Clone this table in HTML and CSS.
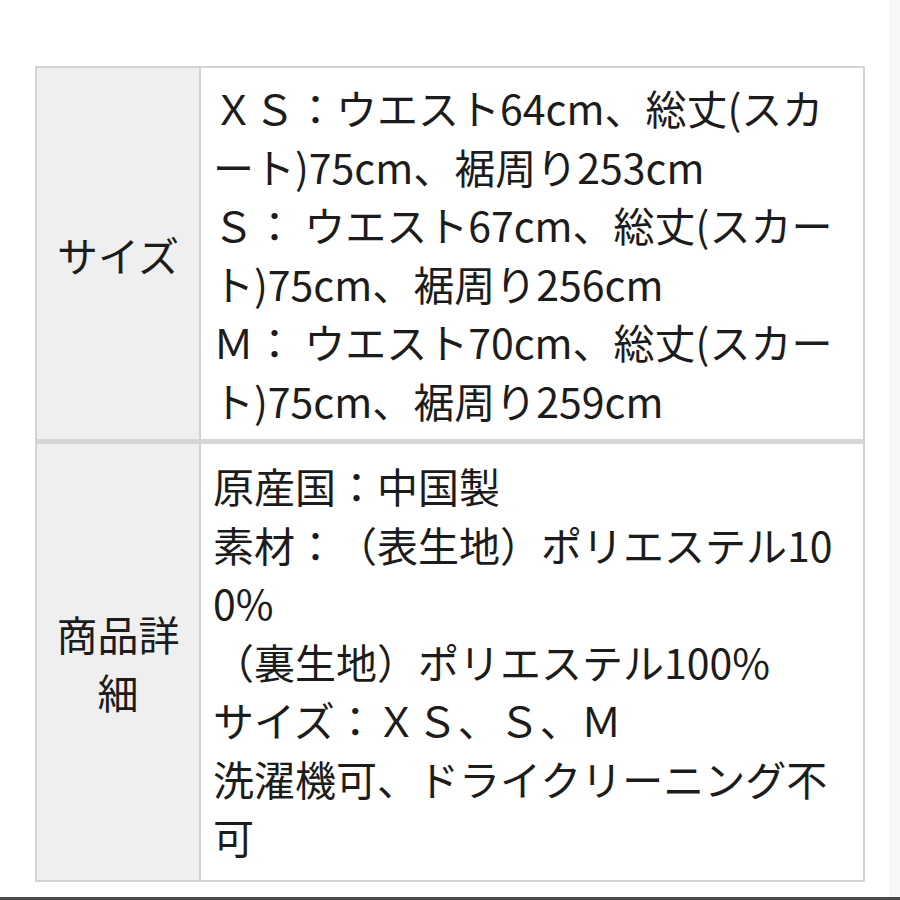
FILE: index.html
```html
<!DOCTYPE html>
<html lang="ja">
<head>
<meta charset="utf-8">
<link rel="stylesheet" href="styles.css">
</head>
<body>
<div class="page">
  <div class="spec">
    <div class="row row-size">
      <div class="label">サイズ</div>
      <div class="value">ＸＳ：ウエスト64cm、総丈(スカート)75cm、裾周り253cm<br>Ｓ： ウエスト67cm、総丈(スカート)75cm、裾周り256cm<br>Ｍ： ウエスト70cm、総丈(スカート)75cm、裾周り259cm</div>
    </div>
    <div class="row row-detail">
      <div class="label">商品詳細</div>
      <div class="value">原産国：中国製<br>素材：（表生地）ポリエステル100%<br>（裏生地）ポリエステル100%<br>サイズ：ＸＳ、Ｓ、Ｍ<br>洗濯機可、ドライクリーニング不可</div>
    </div>
  </div>
  <div class="bottom-bar"></div>
</div>
</body>
</html>
```

FILE: styles.css
```css
html, body {
  margin: 0;
  padding: 0;
}
body {
  width: 900px;
  height: 900px;
  overflow: hidden;
  background: linear-gradient(to right, #ffffff 0, #ffffff 889px, #f7f7f7 889px);
  font-family: "Noto Sans CJK JP", "Noto Sans", sans-serif;
  color: #1c1c1c;
  text-spacing-trim: space-all;
}
.page {
  padding-top: 66px;
  display: flex;
  flex-direction: column;
}
.spec {
  margin-left: 35px;
  width: 830px;
  box-sizing: border-box;
  border: 2px solid #d3d3d3;
  background: #fff;
}
.row {
  display: grid;
  grid-template-columns: 164px 1fr;
}
.row + .row {
  border-top: 5px solid #d6d6d6;
}
.label {
  background: #efefef;
  border-right: 2px solid #d3d3d3;
  display: flex;
  align-items: center;
  justify-content: center;
  text-align: center;
  padding: 0 16px;
  font-size: 41px;
  line-height: 58px;
  word-break: break-all;
}
.value {
  font-size: 41px;
  line-height: 58.5px;
  padding: 10px 12px 10px 12px;
  word-break: break-all;
  line-break: normal;
}
.row-detail .value {
  padding-top: 12px;
  padding-bottom: 14px;
}
.bottom-bar {
  margin-top: 15px;
  height: 4px;
  background: #4a4a4a;
}
```
